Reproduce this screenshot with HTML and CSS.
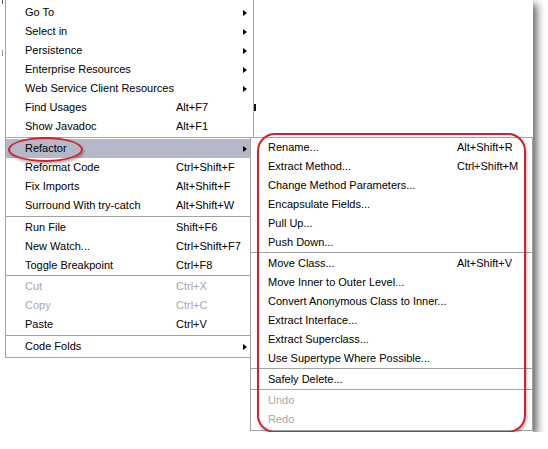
FILE: index.html
```html
<!DOCTYPE html>
<html>
<head>
<meta charset="utf-8">
<link rel="stylesheet" href="styles.css">
</head>
<body>
<div class="shot">
  <div class="menu main">
    <div class="item"><span class="label">Go To</span><span class="key"></span><span class="arrow"></span></div>
    <div class="item"><span class="label">Select in</span><span class="key"></span><span class="arrow"></span></div>
    <div class="item"><span class="label">Persistence</span><span class="key"></span><span class="arrow"></span></div>
    <div class="item"><span class="label">Enterprise Resources</span><span class="key"></span><span class="arrow"></span></div>
    <div class="item"><span class="label">Web Service Client Resources</span><span class="key"></span><span class="arrow"></span></div>
    <div class="item"><span class="label">Find Usages</span><span class="key">Alt+F7</span></div>
    <div class="item"><span class="label">Show Javadoc</span><span class="key">Alt+F1</span></div>
    <div class="sep"></div>
    <div class="item active"><span class="label">Refactor</span><span class="key"></span><span class="arrow"></span></div>
    <div class="item"><span class="label">Reformat Code</span><span class="key">Ctrl+Shift+F</span></div>
    <div class="item"><span class="label">Fix Imports</span><span class="key">Alt+Shift+F</span></div>
    <div class="item"><span class="label">Surround With try-catch</span><span class="key">Alt+Shift+W</span></div>
    <div class="sep"></div>
    <div class="item"><span class="label">Run File</span><span class="key">Shift+F6</span></div>
    <div class="item"><span class="label">New Watch...</span><span class="key">Ctrl+Shift+F7</span></div>
    <div class="item"><span class="label">Toggle Breakpoint</span><span class="key">Ctrl+F8</span></div>
    <div class="sep thin"></div>
    <div class="item disabled"><span class="label">Cut</span><span class="key">Ctrl+X</span></div>
    <div class="item disabled"><span class="label">Copy</span><span class="key">Ctrl+C</span></div>
    <div class="item"><span class="label">Paste</span><span class="key">Ctrl+V</span></div>
    <div class="sep"></div>
    <div class="item"><span class="label">Code Folds</span><span class="key"></span><span class="arrow"></span></div>
  </div>

  <div class="menu submenu">
    <div class="item"><span class="label">Rename...</span><span class="key">Alt+Shift+R</span></div>
    <div class="item"><span class="label">Extract Method...</span><span class="key">Ctrl+Shift+M</span></div>
    <div class="item"><span class="label">Change Method Parameters...</span><span class="key"></span></div>
    <div class="item"><span class="label">Encapsulate Fields...</span><span class="key"></span></div>
    <div class="item"><span class="label">Pull Up...</span><span class="key"></span></div>
    <div class="item"><span class="label">Push Down...</span><span class="key"></span></div>
    <div class="sep"></div>
    <div class="item"><span class="label">Move Class...</span><span class="key">Alt+Shift+V</span></div>
    <div class="item"><span class="label">Move Inner to Outer Level...</span><span class="key"></span></div>
    <div class="item"><span class="label">Convert Anonymous Class to Inner...</span><span class="key"></span></div>
    <div class="item"><span class="label">Extract Interface...</span><span class="key"></span></div>
    <div class="item"><span class="label">Extract Superclass...</span><span class="key"></span></div>
    <div class="item"><span class="label">Use Supertype Where Possible...</span><span class="key"></span></div>
    <div class="sep"></div>
    <div class="item"><span class="label">Safely Delete...</span><span class="key"></span></div>
    <div class="sep"></div>
    <div class="item disabled"><span class="label">Undo</span><span class="key"></span></div>
    <div class="item disabled"><span class="label">Redo</span><span class="key"></span></div>
  </div>

  <div class="ring ring-refactor"></div>
  <div class="ring ring-sub"></div>

  <span class="mark mark-a"></span>
  <span class="mark mark-b"></span>
  <span class="mark mark-c"></span>
</div>
</body>
</html>
```

FILE: styles.css
```css
html, body {
  margin: 0;
  padding: 0;
  background: #ffffff;
}

.shot {
  position: relative;
  width: 533px;
  height: 432px;
  background: #ffffff;
  box-shadow: 4px 4px 8px rgba(0, 0, 0, 0.6);
  font-family: "Liberation Sans", Arial, sans-serif;
  font-size: 11px;
  color: #000000;
}

.menu {
  background: #ffffff;
  border: 1px solid #a3a3a3;
  box-sizing: border-box;
}

.main {
  margin-left: 5px;
  width: 249px;
  border-top: none;
  padding-top: 3px;
  padding-bottom: 1px;
}

.submenu {
  position: absolute;
  left: 250px;
  top: 137px;
  width: 283px;
  padding-bottom: 1px;
  z-index: 2;
}

.item {
  display: flex;
  align-items: center;
  height: 19px;
  line-height: 19px;
  white-space: nowrap;
}

.main .item {
  padding: 0 6px 0 19px;
}

.main .label {
  width: 151px;
}

.submenu .item {
  padding: 0 6px 0 17px;
}

.submenu .label {
  width: 189px;
}

.key {
  flex: 1;
}

.arrow {
  width: 0;
  height: 0;
  border-left: 4px solid #000000;
  border-top: 3.5px solid transparent;
  border-bottom: 3.5px solid transparent;
}

.active {
  background: #b5b8c8;
}

.disabled {
  color: #a8a8a8;
}

.sep {
  height: 1px;
  border-top: 1px solid #a3a3a3;
}

.main .sep {
  margin-top: 1px;
}

.main .sep.thin {
  margin-top: 0;
}

.ring {
  position: absolute;
  border: 2px solid #d4202a;
  box-sizing: border-box;
  z-index: 3;
  box-shadow: 1px 2px 3px rgba(0, 0, 0, 0.3);
}

.ring-refactor {
  left: 8px;
  top: 137px;
  width: 75px;
  height: 25px;
  border-radius: 50%;
}

.ring-sub {
  left: 257px;
  top: 133px;
  width: 269px;
  height: 300px;
  border-radius: 18px;
}

.mark {
  position: absolute;
  background: #555555;
}

.mark-a {
  left: 254px;
  top: 104px;
  width: 2px;
  height: 7px;
  background: #111111;
}

.mark-b {
  left: 2px;
  top: 0;
  width: 1px;
  height: 4px;
}

.mark-c {
  left: 2px;
  top: 50px;
  width: 1px;
  height: 6px;
  background: #999999;
}
```
